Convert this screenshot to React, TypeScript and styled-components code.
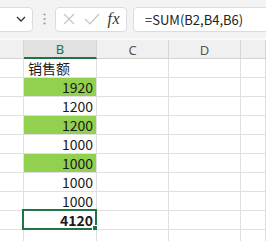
import React from "react";
import styled, { createGlobalStyle } from "styled-components";

const GlobalStyle = createGlobalStyle`
  html, body {
    margin: 0;
    padding: 0;
    background: #ffffff;
    overflow: hidden;
  }
  body {
    font-family: "Noto Sans CJK SC", "Noto Sans", sans-serif;
  }
`;

const Page = styled.div`
  width: 266px;
  height: 241px;
  overflow: hidden;
  display: flex;
  flex-direction: column;
`;

const Toolbar = styled.div`
  height: 38px;
  background: #f3f3f3;
  border-bottom: 2px solid #fafafa;
  display: flex;
  align-items: center;
  flex-shrink: 0;
`;

const Box = styled.div`
  height: 25px;
  box-sizing: border-box;
  background: #ffffff;
  border: 1px solid #dcdcdc;
  border-radius: 4px;
  display: flex;
  align-items: center;
`;

const NameBox = styled(Box)`
  width: 44px;
  margin-left: -11px;
  justify-content: flex-end;
  padding-right: 6px;
`;

const Grip = styled.div`
  width: 22px;
  display: flex;
  justify-content: center;
`;

const FnBox = styled(Box)`
  width: 72px;
  padding: 0 6px 0 6px;
  justify-content: space-between;
`;

const Fx = styled.span`
  font-family: "Liberation Serif", serif;
  font-style: italic;
  font-size: 16px;
  color: #333333;
  letter-spacing: 0.5px;
`;

const FormulaBox = styled(Box)`
  flex: 1;
  margin-left: 6px;
  margin-right: -10px;
  padding-left: 11px;
  font-size: 13px;
  color: #222222;
`;

const Sheet = styled.div`
  display: grid;
  grid-template-columns: 24px 73px 72px 72px 1fr;
  grid-auto-rows: 19px;
`;

const Head = styled.div<{ $active?: boolean }>`
  height: 19px;
  box-sizing: border-box;
  background: ${(p) => (p.$active ? "#e1e1e1" : "#f0f0f0")};
  border-right: 1px solid #d6d6d6;
  border-bottom: ${(p) => (p.$active ? "2px solid #217346" : "1px solid #d4d4d4")};
  display: flex;
  align-items: center;
  justify-content: center;
  font-family: "Noto Sans", sans-serif;
  font-size: 13px;
  color: ${(p) => (p.$active ? "#217346" : "#555555")};
  padding-top: 1px;
`;

const Cell = styled.div<{ $fill?: boolean; $left?: boolean; $bold?: boolean }>`
  position: relative;
  box-sizing: border-box;
  border-right: 1px solid #e0e0e0;
  border-bottom: 1px solid #e0e0e0;
  background: ${(p) => (p.$fill ? "#92d050" : "#ffffff")};
  display: flex;
  align-items: center;
  justify-content: ${(p) => (p.$left ? "flex-start" : "flex-end")};
  padding: 0 3px 0 4px;
  font-size: 14px;
  font-weight: ${(p) => (p.$bold ? 700 : 400)};
  color: #1a1a1a;
  white-space: nowrap;
`;

const Selected = styled.div`
  position: absolute;
  left: -2px;
  top: -2px;
  right: -1px;
  bottom: -1px;
  border: 2px solid #217346;
  pointer-events: none;
`;

const Handle = styled.div`
  position: absolute;
  right: -4px;
  bottom: -4px;
  width: 5px;
  height: 5px;
  background: #217346;
  border: 1px solid #ffffff;
`;

const rows: { value: string; fill?: boolean; left?: boolean; total?: boolean }[] = [
  { value: "销售额", left: true },
  { value: "1920", fill: true },
  { value: "1200" },
  { value: "1200", fill: true },
  { value: "1000" },
  { value: "1000", fill: true },
  { value: "1000" },
  { value: "1000" },
  { value: "4120", total: true },
  { value: "" },
];

export default function App() {
  return (
    <Page>
      <GlobalStyle />
      <Toolbar>
        <NameBox>
          <svg width="10" height="6" viewBox="0 0 10 6">
            <path d="M1 1 L5 5 L9 1" fill="none" stroke="#333" strokeWidth="1.3" />
          </svg>
        </NameBox>
        <Grip>
          <svg width="3" height="12" viewBox="0 0 3 12">
            <circle cx="1.5" cy="1.5" r="1.1" fill="#9a9a9a" />
            <circle cx="1.5" cy="6" r="1.1" fill="#9a9a9a" />
            <circle cx="1.5" cy="10.5" r="1.1" fill="#9a9a9a" />
          </svg>
        </Grip>
        <FnBox>
          <svg width="14" height="14" viewBox="0 0 14 14">
            <path d="M2 2 L12 12 M12 2 L2 12" stroke="#c4c4c4" strokeWidth="1.2" fill="none" />
          </svg>
          <svg width="16" height="12" viewBox="0 0 16 12">
            <path d="M1 6 L6 11 L15 1" stroke="#c4c4c4" strokeWidth="1.2" fill="none" />
          </svg>
          <Fx>fx</Fx>
        </FnBox>
        <FormulaBox>=SUM(B2,B4,B6)</FormulaBox>
      </Toolbar>
      <Sheet>
        <Head />
        <Head $active>B</Head>
        <Head>C</Head>
        <Head>D</Head>
        <Head />
        {rows.map((r, i) => (
          <React.Fragment key={i}>
            <Cell />
            <Cell $fill={r.fill} $left={r.left} $bold={r.total}>
              {r.value}
              {r.total && (
                <Selected>
                  <Handle />
                </Selected>
              )}
            </Cell>
            <Cell />
            <Cell />
            <Cell />
          </React.Fragment>
        ))}
      </Sheet>
    </Page>
  );
}
